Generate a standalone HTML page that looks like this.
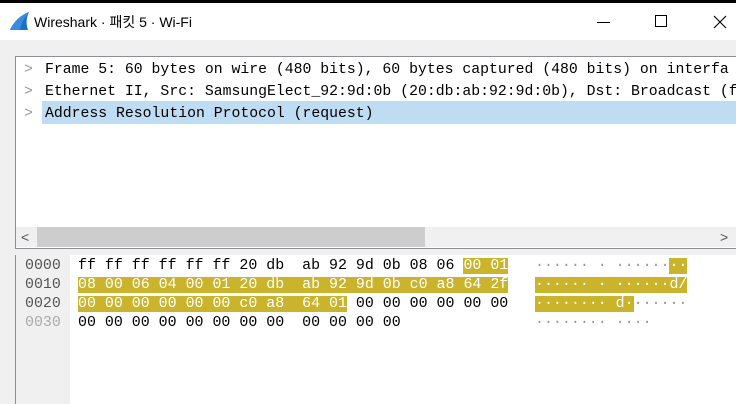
<!DOCTYPE html>
<html><head><meta charset="utf-8"><style>
*{margin:0;padding:0;box-sizing:border-box}
body{width:736px;height:404px;overflow:hidden;background:#f0f0f0;position:relative;font-family:"Liberation Mono","DejaVu Sans Mono",monospace}
.abs{position:absolute}
.mono{font-family:"Liberation Mono",monospace;font-size:14.8px;white-space:pre;line-height:19px}
.hx{font-size:14.95px}
.hl{background:#c9b42c;color:#fff}
</style></head><body>
<div class="abs" style="left:0;top:0;width:736px;height:3px;background:#000"></div>
<div class="abs" style="left:0;top:3px;width:736px;height:37px;background:#fff"></div>
<svg class="abs" style="left:8px;top:11px" width="24" height="20" viewBox="0 0 24 20"><path d="M2 19 C6 10 13 4 21 1 C18 7 18 13 20 19 Z" fill="#1f6fc5"/><path d="M2 19 C6 10 13 4 21 1 C17 6 13 12 12 19Z" fill="#3b8ae0"/></svg>
<div class="abs" style="left:34px;top:12px;font-family:'Liberation Sans','Noto Sans CJK KR',sans-serif;font-size:14px;color:#000">Wireshark · 패킷 5 · Wi-Fi</div>
<div class="abs" style="left:597px;top:22px;width:13px;height:1px;background:#000"></div>
<div class="abs" style="left:655px;top:15px;width:12px;height:12px;border:1px solid #000"></div>
<svg class="abs" style="left:713px;top:15px" width="14" height="14"><path d="M1 1L13 13M13 1L1 13" stroke="#000" stroke-width="1.1"/></svg>

<div class="abs" style="left:15px;top:56px;width:721px;height:193px;background:#fff;border:1px solid #8e8f94;border-right:none"></div>
<div class="abs" style="left:42px;top:101px;width:694px;height:23px;background:#c0dcf2"></div>
<div class="abs mono" style="left:24px;top:59px;line-height:22px;color:#999">&gt;
&gt;
&gt;</div>
<div class="abs mono" style="left:45px;top:59px;line-height:22px;color:#000">Frame 5: 60 bytes on wire (480 bits), 60 bytes captured (480 bits) on interfa
Ethernet II, Src: SamsungElect_92:9d:0b (20:db:ab:92:9d:0b), Dst: Broadcast (f
Address Resolution Protocol (request)</div>
<div class="abs" style="left:16px;top:227px;width:720px;height:20px;background:#f0f0f0"></div>
<div class="abs" style="left:37px;top:227px;width:388px;height:20px;background:#cdcdcd"></div>
<div class="abs" style="left:21px;top:229px;font-size:14px;color:#555;font-family:'Liberation Sans',sans-serif">&lt;</div>
<div class="abs" style="left:720px;top:229px;font-size:14px;color:#555;font-family:'Liberation Sans',sans-serif">&gt;</div>

<div class="abs" style="left:15px;top:255px;width:1px;height:149px;background:#8e8f94"></div>
<div class="abs" style="left:70px;top:255px;width:666px;height:149px;background:#fff"></div>
<div class="abs mono hx" style="left:25px;top:257px;color:#555">0000
0010
0020
<span style="color:#aaa">0030</span></div>
<div class="abs mono hx" style="left:78px;top:257px;color:#000">ff ff ff ff ff ff 20 db  ab 92 9d 0b 08 06 <span class="hl">00 01</span>
<span class="hl">08 00 06 04 00 01 20 db  ab 92 9d 0b c0 a8 64 2f</span>
<span class="hl">00 00 00 00 00 00 c0 a8  64 01</span> 00 00 00 00 00 00
00 00 00 00 00 00 00 00  00 00 00 00</div>
<div class="abs mono hx" style="left:535px;top:257px;color:#999">······ · ······<span class="hl">··</span>
<span class="hl">······ · ······d/</span>
<span class="hl">········ d·</span>······
········ ····</div>
</body></html>
